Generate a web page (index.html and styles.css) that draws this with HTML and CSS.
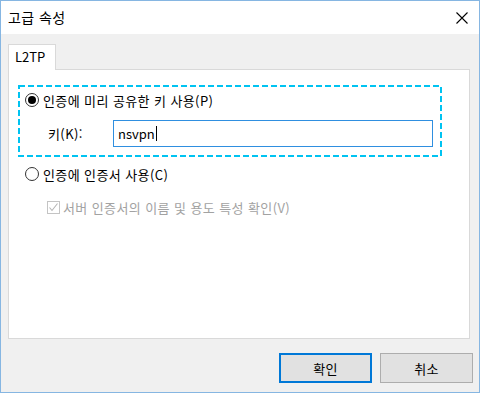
FILE: index.html
```html
<!DOCTYPE html>
<html lang="ko">
<head>
<meta charset="utf-8">
<title>고급 속성</title>
<link rel="stylesheet" href="styles.css">
</head>
<body>
<div class="window">
  <div class="titlebar">
    <span class="title">고급 속성</span>
    <svg class="close" width="12" height="12" viewBox="0 0 12 12"><path d="M0.5 0.5 L11.5 11.5 M11.5 0.5 L0.5 11.5" stroke="#000" stroke-width="1.1" fill="none"/></svg>
  </div>
  <div class="content">
    <div class="tabs"><div class="tab">L2TP</div></div>
    <div class="panel">
      <div class="focusbox">
        <svg class="dash" width="424" height="72" viewBox="0 0 424 72"><rect x="1" y="1" width="422" height="70" fill="none" stroke="#00c3f1" stroke-width="2" stroke-dasharray="6 3"/></svg>
        <div class="row radio-row">
          <span class="radio checked"></span>
          <span class="label">인증에 미리 공유한 키 사용(P)</span>
        </div>
        <div class="row key-row">
          <span class="key-label">키(K):</span>
          <div class="input"><span>nsvpn</span><span class="caret"></span></div>
        </div>
      </div>
      <div class="row radio-row second">
        <span class="radio"></span>
        <span class="label">인증에 인증서 사용(C)</span>
      </div>
      <div class="row check-row">
        <span class="check"><svg width="11" height="11" viewBox="0 0 11 11"><path d="M1.5 5.5 L4 8.5 L9.5 1.5" stroke="#b5b5b5" stroke-width="1.1" fill="none"/></svg></span>
        <span class="label disabled">서버 인증서의 이름 및 용도 특성 확인(V)</span>
      </div>
    </div>
    <div class="buttons">
      <div class="btn default">확인</div>
      <div class="btn">취소</div>
    </div>
  </div>
</div>
</body>
</html>
```
FILE: styles.css
```css
html, body {
  margin: 0;
  padding: 0;
}
body {
  font-family: "Noto Sans CJK KR", "Noto Sans", sans-serif;
  font-size: 13px;
  letter-spacing: 0.4px;
  color: #000;
  background: #fff;
}
.window {
  width: 480px;
  height: 393px;
  box-sizing: border-box;
  border: 1px solid #86b6e2;
  background: #f0f0f0;
  display: flex;
  flex-direction: column;
}
.titlebar {
  height: 33px;
  background: #fff;
  display: flex;
  align-items: center;
  justify-content: space-between;
  padding: 0 11px 0 7px;
}
.title {
  font-size: 14px;
  line-height: 1;
  letter-spacing: 0.4px;
  margin-top: -1px;
}
.close {
  display: block;
  margin-top: 1px;
}
.content {
  padding: 10px 0 0 7px;
}
.tabs {
  display: flex;
  height: 25px;
  position: relative;
  z-index: 1;
}
.tab {
  width: 48px;
  height: 26px;
  border: 1px solid #d9d9d9;
  border-bottom: none;
  background: #fff;
  padding-left: 6px;
  box-sizing: border-box;
  line-height: 24px;
  letter-spacing: 0;
}
.panel {
  width: 462px;
  height: 270px;
  box-sizing: border-box;
  border: 1px solid #d9d9d9;
  background: #fff;
  padding: 15px 0 0 9px;
}
.focusbox {
  position: relative;
  width: 424px;
  height: 72px;
  box-sizing: border-box;
}
.dash {
  position: absolute;
  left: 0;
  top: 0;
}
.row {
  display: flex;
  align-items: center;
}
.radio-row {
  height: 30px;
  padding-left: 7px;
}
.radio {
  width: 14px;
  height: 14px;
  box-sizing: border-box;
  border: 1px solid #333;
  border-radius: 50%;
  background: #fff;
  display: flex;
  align-items: center;
  justify-content: center;
  margin-right: 4px;
  flex: none;
}
.radio.checked::after {
  content: "";
  width: 8px;
  height: 8px;
  border-radius: 50%;
  background: #000;
}
.label {
  line-height: 1;
  white-space: nowrap;
}
.key-row {
  margin-top: 5px;
  height: 27px;
  padding-left: 30px;
}
.key-label {
  width: 65px;
  line-height: 1;
}
.input {
  width: 320px;
  height: 27px;
  box-sizing: border-box;
  border: 1px solid #2f8fe0;
  display: flex;
  align-items: center;
  padding-left: 4px;
  background: #fff;
  letter-spacing: 0;
}
.caret {
  width: 1px;
  height: 15px;
  background: #000;
  margin-left: 1px;
}
.radio-row.second {
  margin-top: 2px;
}
.check-row {
  height: 30px;
  padding-left: 29px;
  margin-top: 3px;
}
.check {
  width: 13px;
  height: 13px;
  box-sizing: border-box;
  border: 1px solid #c4c4c4;
  display: flex;
  align-items: center;
  justify-content: center;
  margin-right: 3px;
  flex: none;
}
.check svg {
  display: block;
}
.disabled {
  color: #a2a2a2;
}
.buttons {
  display: flex;
  justify-content: flex-end;
  gap: 8px;
  margin-top: 14px;
  padding-right: 6px;
}
.btn {
  width: 93px;
  height: 30px;
  box-sizing: border-box;
  border: 1px solid #adadad;
  background: #e1e1e1;
  display: flex;
  align-items: center;
  justify-content: center;
  line-height: 1;
}
.btn.default {
  border: 2px solid #0078d7;
}
```
